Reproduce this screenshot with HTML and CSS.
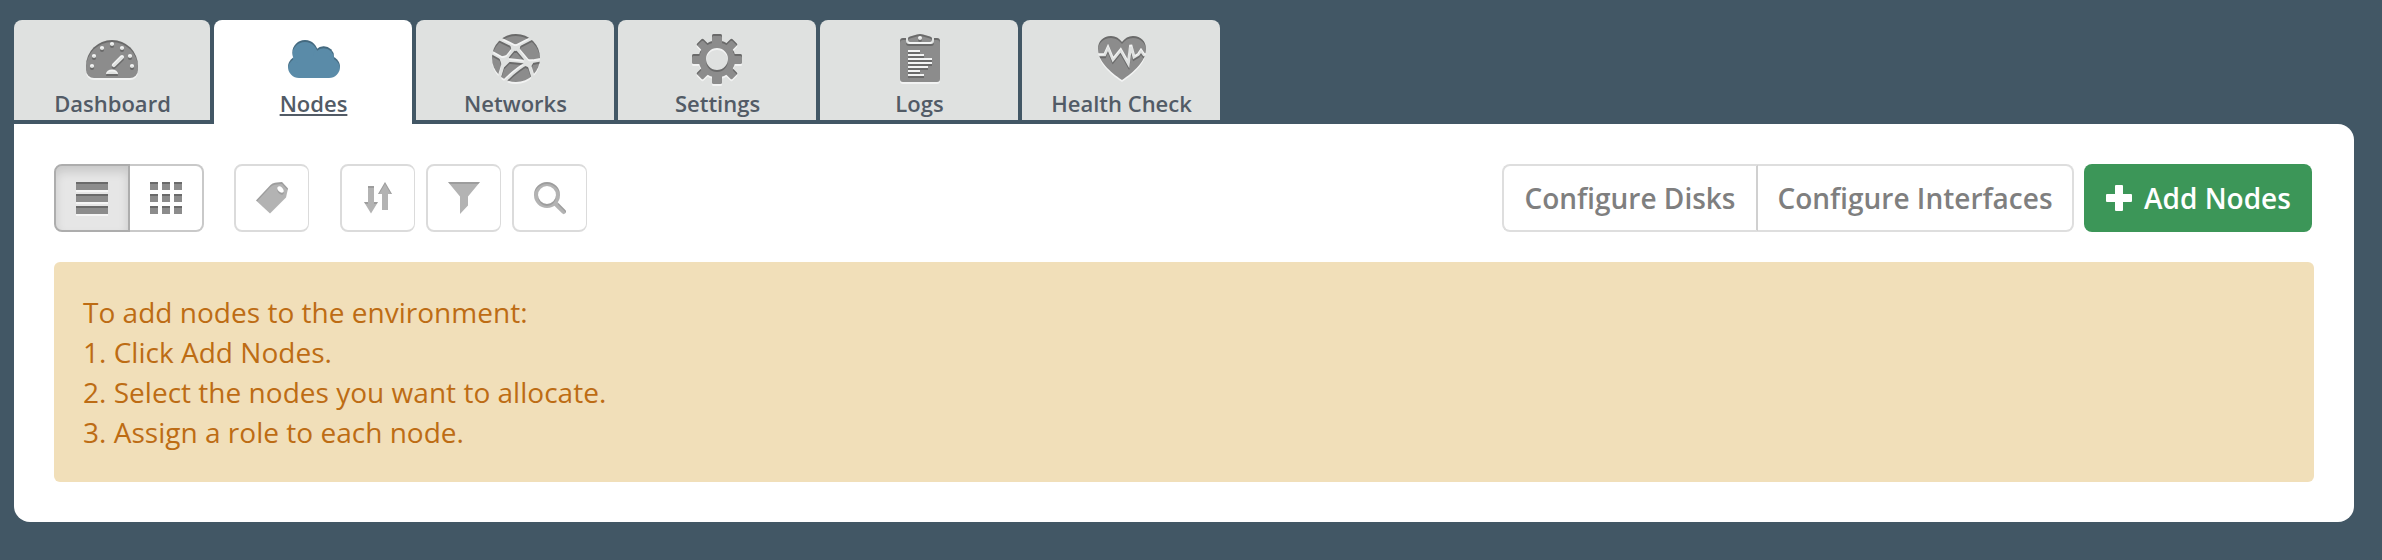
FILE: index.html
```html
<!DOCTYPE html>
<html lang="en">
<head>
<meta charset="utf-8">
<title>Nodes</title>
<link rel="stylesheet" href="styles.css">
</head>
<body>
<svg class="defs" width="0" height="0" aria-hidden="true">
  <defs>
    <!-- engraved look: dark upper edge, light lower edge -->
    <filter id="engrave" filterUnits="userSpaceOnUse" x="0" y="0" width="60" height="56" color-interpolation-filters="sRGB">
      <feOffset in="SourceAlpha" dy="2" result="low"/>
      <feFlood flood-color="#fff" flood-opacity=".6"/>
      <feComposite in2="low" operator="in" result="light"/>
      <feFlood flood-color="#000" flood-opacity=".24"/>
      <feComposite in2="SourceAlpha" operator="in" result="d"/>
      <feComposite in="d" in2="low" operator="out" result="dark"/>
      <feMerge>
        <feMergeNode in="light"/>
        <feMergeNode in="SourceGraphic"/>
        <feMergeNode in="dark"/>
      </feMerge>
    </filter>
    <mask id="m-dash" maskUnits="userSpaceOnUse" x="0" y="0" width="60" height="52">
      <rect width="60" height="52" fill="#fff"/>
      <circle cx="10" cy="34" r="2.1"/><circle cx="12" cy="24" r="2.1"/><circle cx="20" cy="16" r="2.1"/><circle cx="30" cy="12" r="2.1"/><circle cx="40" cy="16" r="2.1"/><circle cx="48" cy="24" r="2.1"/><circle cx="50" cy="34" r="2.1"/>
      <path d="M31.8 33.2L40 25" stroke="#000" stroke-width="4" stroke-linecap="round"/>
      <path d="M24 42a6 4.5 0 0 1 12 0z"/>
    </mask>
    <mask id="m-net" maskUnits="userSpaceOnUse" x="0" y="0" width="60" height="52">
      <rect width="60" height="52" fill="#fff"/>
      <path d="M13 6L30.500 14.500L49 5M30.500 14.500L19.500 28M30.500 14.500L43.500 30M5 19.500L19.500 27.500L43.500 30L57 27.500M19.500 28L14 46M43.500 30.500Q32 36 19 49.500M43.500 30.500L49 48" fill="none" stroke="#000" stroke-width="3.600"/>
      <path d="M25 12.500L36 12L34.500 17.500L30.700 19L26.500 18zM14 25L22 23L26 28.500L19.500 35L17 34zM40 27L48 27.500L48 31.500L45 36L38 33z"/>
    </mask>
    <mask id="m-heart" maskUnits="userSpaceOnUse" x="0" y="0" width="60" height="52">
      <rect width="60" height="52" fill="#fff"/>
      <path d="M5 22.800H13.700L17 15.500L22 27.500L29.700 18L37.300 31.500L39.700 13L43 25L47.300 22.500L50 18.500L53 22.800H57" fill="none" stroke="#000" stroke-width="3"/>
    </mask>
  </defs>
</svg>

<nav class="tabs">
  <a class="tab tab-first">
    <svg class="tab-icon" viewBox="0 0 60 52"><g filter="url(#engrave)"><g mask="url(#m-dash)"><path d="M4 34a26 26 0 0 1 52 0v4a8 8 0 0 1-8 8H12a8 8 0 0 1-8-8z"/></g></g></svg>
    <span class="tab-label">Dashboard</span>
  </a>
  <a class="tab active">
    <svg class="tab-icon" viewBox="0 0 60 52"><g filter="url(#engrave)"><circle cx="16" cy="35" r="11"/><circle cx="22" cy="20.700" r="12.700"/><circle cx="40.700" cy="24.500" r="10.300"/><circle cx="46" cy="35" r="11"/><path d="M16 24H46V46H16z"/></g></svg>
    <span class="tab-label">Nodes</span>
  </a>
  <a class="tab">
    <svg class="tab-icon" viewBox="0 0 60 52"><g filter="url(#engrave)"><g mask="url(#m-net)"><circle cx="31" cy="26" r="24"/></g></g></svg>
    <span class="tab-label">Networks</span>
  </a>
  <a class="tab">
    <svg class="tab-icon" viewBox="0 0 60 52"><g filter="url(#engrave)"><circle cx="30" cy="27" r="14.700" fill="none" stroke="#8c8c8c" stroke-width="7.400"/><rect x="25" y="2" width="10" height="12" rx="1.500"/><rect x="25" y="40" width="10" height="12" rx="1.500"/><rect x="5" y="22" width="12" height="10" rx="1.500"/><rect x="43" y="22" width="12" height="10" rx="1.500"/><g transform="rotate(45 30 27)"><rect x="25.500" y="2" width="9" height="12" rx="1.500"/><rect x="25.500" y="40" width="9" height="12" rx="1.500"/><rect x="5" y="22.500" width="12" height="9" rx="1.500"/><rect x="43" y="22.500" width="12" height="9" rx="1.500"/></g></g></svg>
    <span class="tab-label">Settings</span>
  </a>
  <a class="tab">
    <svg class="tab-icon" viewBox="0 0 60 52"><g filter="url(#engrave)"><path fill-rule="evenodd" d="M14 6H17V9Q17 12 20 12H42Q45 12 45 9V6H48Q51 6 51 9V47Q51 50 48 50H14Q11 50 11 47V9Q11 6 14 6zM19 18V20H31V18zM19 22V24H35V22zM19 26V28H43V26zM19 30V32H43V30zM19 34V36H39V34zM19 38V40H31V38zM19 42V44H35V42z"/><path fill-rule="evenodd" d="M19 6.500Q19 5 21 4.500L28 2.500Q31 1.500 34 2.500L41 4.500Q43 5 43 6.500V8Q43 10 41 10H21Q19 10 19 8zM31 4a2 2 0 1 0 0 4a2 2 0 1 0 0-4z"/></g></svg>
    <span class="tab-label">Logs</span>
  </a>
  <a class="tab">
    <svg class="tab-icon" viewBox="0 0 60 52"><g filter="url(#engrave)"><g mask="url(#m-heart)"><path d="M31 10C34 6 37.500 4 42 4C50 4 55 9.500 55 17C55 29 43 40 31 48C19 40 7 29 7 17C7 9.500 12 4 20 4C24.500 4 28 6 31 10z"/></g></g></svg>
    <span class="tab-label">Health Check</span>
  </a>
</nav>

<main class="panel">
  <div class="toolbar">
    <div class="view-switch">
      <button class="tool pressed" aria-label="List view"><svg class="tool-icon" viewBox="0 0 40 40"><g filter="url(#engrave)"><path d="M4 4h32v8H4zM4 16h32v8H4zM4 28h32v8H4z"/></g></svg></button>
      <button class="tool grid-view" aria-label="Grid view"><svg class="tool-icon" viewBox="0 0 40 40"><g filter="url(#engrave)"><path d="M4 4h8v8H4zM16 4h8v8h-8zM28 4h8v8h-8zM4 16h8v8H4zM16 16h8v8h-8zM28 16h8v8h-8zM4 28h8v8H4zM16 28h8v8h-8zM28 28h8v8h-8z"/></g></svg></button>
    </div>
    <button class="tool dim tag-tool" aria-label="Labels"><svg class="tool-icon" viewBox="0 0 40 40"><g filter="url(#engrave)"><path fill-rule="evenodd" d="M4 22.500L18.500 7Q20.500 5 23 4.700L30 4L36 10.500L34 19.500L18 35.500zM27 8.200C24 9 25.500 12.500 27.500 13.800C30 15.500 32.500 14.500 31.500 12C31 10.200 29 8 27 8.200z"/></g></svg></button>
    <div class="filters">
      <button class="tool dim" aria-label="Sort"><svg class="tool-icon" viewBox="0 0 40 40"><g filter="url(#engrave)"><path d="M10 8h6v16h4L13 35.500L6 24h4zM27 4L34 16h-4v16h-6V16h-4z"/></g></svg></button>
      <button class="tool dim" aria-label="Filter"><svg class="tool-icon" viewBox="0 0 40 40"><g filter="url(#engrave)"><path d="M4 4H36L24 18.500V27.500L16 36V18.500z"/></g></svg></button>
      <button class="tool dim" aria-label="Search"><svg class="tool-icon" viewBox="0 0 40 40"><g filter="url(#engrave)" fill="none" stroke="#8c8c8c"><circle cx="17" cy="17" r="11" stroke-width="4"/><path d="M25.500 25.500L33.700 33.700" stroke-width="4.600" stroke-linecap="round"/></g></svg></button>
    </div>
    <div class="actions">
      <div class="configure">
        <button class="btn disks">Configure Disks</button>
        <button class="btn interfaces">Configure Interfaces</button>
      </div>
      <button class="btn add"><svg class="plus" viewBox="0 0 26 26"><path d="M10 0h6q1 0 1 1v8h8q1 0 1 1v6q0 1-1 1h-8v8q0 1-1 1h-6q-1 0-1-1v-8H1q-1 0-1-1v-6q0-1 1-1h8V1q0-1 1-1z"/></svg><span>Add Nodes</span></button>
    </div>
  </div>
  <div class="notice">
    <div>To add nodes to the environment:</div>
    <div>1. Click Add Nodes.</div>
    <div>2. Select the nodes you want to allocate.</div>
    <div>3. Assign a role to each node.</div>
  </div>
</main>
</body>
</html>
```
FILE: styles.css
```css
* { box-sizing: border-box; }
body {
  margin: 0;
  height: 560px;
  padding: 20px 28px 0 14px;
  background: #425765;
  font-family: "Open Sans", "Noto Sans", sans-serif;
  overflow: hidden;
}
.defs { display: block; position: absolute; }
.tabs { display: flex; gap: 4px; height: 104px; }
.tab {
  display: flex;
  flex-direction: column;
  align-items: center;
  width: 198px;
  height: 100px;
  padding-top: 12px;
  background: #dfe1e0;
  border-radius: 8px 8px 0 0;
  color: #525b66;
}
.tab-first { width: 196px; }
.tab.active { height: 104px; background: #fff; }
.tab-icon { width: 60px; height: 52px; overflow: visible; fill: #8c8c8c; flex: none; }
.active .tab-icon { fill: #5a8ba8; }
.tab-label { font-size: 22px; font-weight: 600; line-height: 30px; margin-top: 4px; padding-left: 1px; white-space: nowrap; }
.active .tab-label { padding-left: 0; margin-left: 1px; text-decoration: underline; text-decoration-thickness: 2px; text-underline-offset: 2px; }
.panel {
  height: 398px;
  padding: 40px 40px 0;
  background: #fff;
  border-radius: 0 16px 16px 16px;
}
.toolbar { display: flex; height: 68px; }
.view-switch { display: flex; }
.tool {
  display: flex;
  align-items: center;
  width: 75px;
  height: 68px;
  padding: 0 0 0 16px;
  border: 2px solid #c9c9c9;
  border-radius: 8px;
  background: #fff;
}
.tool-icon { width: 40px; height: 40px; fill: #8c8c8c; flex: none; overflow: visible; }
.pressed {
  width: 76px;
  background: #e6e6e6;
  border-color: #adadad;
  border-radius: 8px 0 0 8px;
  box-shadow: inset 0 6px 10px rgba(0, 0, 0, .125);
}
.grid-view { width: 74px; border-left: 0; border-radius: 0 8px 8px 0; }
.dim { opacity: .65; border-right-width: 1px; }
.tag-tool { margin-left: 30px; }
.filters { display: flex; gap: 11px; margin-left: 31px; }
.actions { display: flex; gap: 10px; margin-left: auto; margin-right: 2px; }
.configure { display: flex; }
.btn {
  height: 68px;
  padding: 0;
  border: 2px solid #dedede;
  background: #fff;
  color: #7f7f7f;
  font: 600 28px/40px "Open Sans", "Noto Sans", sans-serif;
  white-space: nowrap;
}
.disks { width: 256px; border-radius: 8px 0 0 8px; border-right-color: #d0d0d0; }
.interfaces { width: 316px; border-left: 0; border-radius: 0 8px 8px 0; }
.add {
  display: flex;
  align-items: center;
  width: 228px;
  padding-left: 22px;
  gap: 12px;
  border: 0;
  border-radius: 8px;
  background: #3c9658;
  color: #fff;
}
.plus { width: 26px; height: 26px; fill: #fff; flex: none; }
.notice {
  height: 220px;
  margin-top: 30px;
  padding: 30px 29px;
  border-radius: 6px;
  background: #f1dfb9;
  color: #bd6c14;
  font-size: 28px;
  line-height: 40px;
  letter-spacing: .02px;
}
```
